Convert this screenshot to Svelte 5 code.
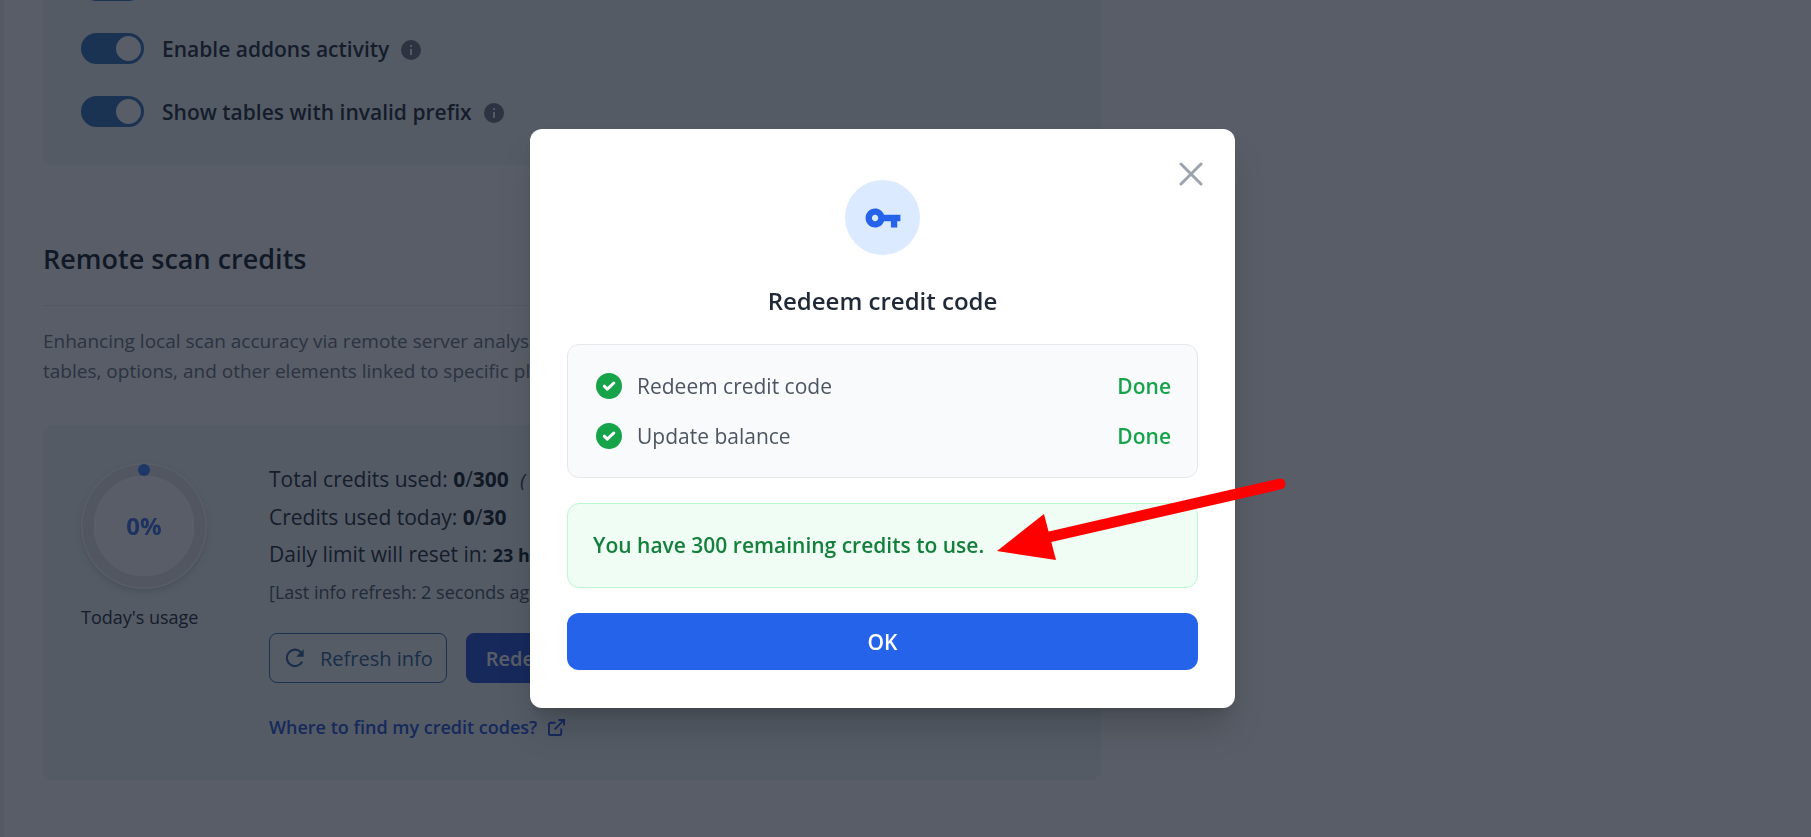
<script>
  const toggles = $state([
    { id: 'addons', label: 'Enable addons activity', on: true },
    { id: 'prefix', label: 'Show tables with invalid prefix', on: true }
  ]);
  let firstOn = $state(true);
  const steps = ['Redeem credit code', 'Update balance'];
</script>

<div class="page">
  <aside></aside>
  <main>
    <section class="panel toggles">
      <div class="toggle-row">
        <input type="checkbox" aria-label="Setting" bind:checked={firstOn} />
      </div>
      {#each toggles as t (t.id)}
        <div class="toggle-row">
          <input type="checkbox" id={t.id} bind:checked={t.on} />
          <label for={t.id}>{t.label}</label>
          <svg class="info" viewBox="0 0 20 20" aria-hidden="true">
            <circle cx="10" cy="10" r="10" />
            <rect x="9" y="9" width="2" height="6" />
            <rect x="9" y="5" width="2" height="2" />
          </svg>
        </div>
      {/each}
    </section>

    <h2>Remote scan credits</h2>
    <p class="intro">
      Enhancing local scan accuracy via remote server analysis<br />
      tables, options, and other elements linked to specific plugins
    </p>

    <section class="panel credits">
      <div class="usage">
        <svg class="ring" viewBox="0 0 126 126" aria-hidden="true">
          <circle cx="63" cy="63" r="63" fill="#fff" />
          <circle cx="63" cy="63" r="56" fill="none" stroke="#e6e7ec" stroke-width="11" />
          <circle cx="63" cy="7" r="6" fill="#3b82f6" />
          <text x="63" y="72" text-anchor="middle">0%</text>
        </svg>
        <span>Today's usage</span>
      </div>
      <div class="stats">
        <p>Total credits used: <b>0</b>/<b>300</b> <i>(</i></p>
        <p>Credits used today: <b>0</b>/<b>30</b></p>
        <p>Daily limit will reset in: <strong>23 hours</strong></p>
        <p class="small">[Last info refresh: 2 seconds ago]</p>
        <div class="actions">
          <button class="refresh" type="button">
            <svg viewBox="0 0 24 24" aria-hidden="true">
              <path d="M20.6 16.5A9.8 9.8 0 1 1 19 5L21 7" fill="none" stroke="currentColor" stroke-width="2.6" />
              <path d="M22.4 1.4v9H13.4z" fill="currentColor" />
            </svg>
            Refresh info
          </button>
          <button class="redeem" type="button">Redeem code</button>
        </div>
        <a href="#codes">
          Where to find my credit codes?
          <svg viewBox="0 0 18 18" aria-hidden="true" fill="none" stroke="currentColor" stroke-width="2">
            <path d="M8 4H3a2 2 0 0 0-2 2v9a2 2 0 0 0 2 2h9a2 2 0 0 0 2-2v-5M11 1h6v6M17 1L7 11" />
          </svg>
        </a>
      </div>
    </section>
  </main>
</div>

<div class="overlay">
  <div class="modal" role="dialog" aria-modal="true" aria-labelledby="modal-title">
    <button class="close" type="button" aria-label="Close">
      <svg viewBox="0 0 24 24" aria-hidden="true">
        <path d="M2 2l20 20M22 2L2 22" fill="none" stroke="currentColor" stroke-width="3" stroke-linecap="round" />
      </svg>
    </button>
    <div class="badge">
      <svg viewBox="0 0 24 24" aria-hidden="true">
        <path fill="currentColor" d="M12.65 10C11.83 7.67 9.61 6 7 6c-3.31 0-6 2.69-6 6s2.69 6 6 6c2.61 0 4.83-1.67 5.65-4H17v4h4v-4h2v-4H12.65zM7 14c-1.1 0-2-.9-2-2s.9-2 2-2 2 .9 2 2-.9 2-2 2z" />
      </svg>
    </div>
    <h3 id="modal-title">Redeem credit code</h3>
    <ul>
      {#each steps as step}
        <li>
          <svg viewBox="0 0 26 26" aria-hidden="true">
            <circle cx="13" cy="13" r="13" fill="#16a34a" />
            <path d="M8.3 13.2l3 2.9L17.8 10" fill="none" stroke="#fff" stroke-width="3" stroke-linecap="round" stroke-linejoin="round" />
          </svg>
          <span>{step}</span>
          <strong>Done</strong>
        </li>
      {/each}
    </ul>
    <p class="notice">You have 300 remaining credits to use.</p>
    <button class="ok" type="button">OK</button>
    <svg class="arrow" viewBox="0 0 290 80" aria-hidden="true">
      <path d="M283 7L52 60" stroke="#f00" stroke-width="11" stroke-linecap="round" />
      <path d="M0 74L47 37L59 83z" fill="#f00" />
    </svg>
  </div>
</div>

<style>
  :global(body) {
    font-family: 'Segoe UI', 'Open Sans', sans-serif;
    font-size: 21px;
    color: #1f2937;
    background: #fff;
    overflow: hidden;
  }
  * {
    box-sizing: border-box;
  }
  h2,
  h3,
  p,
  ul {
    margin: 0;
    padding: 0;
  }
  button {
    font: inherit;
    cursor: pointer;
  }
  svg {
    flex: none;
    display: block;
  }
  .page {
    display: flex;
    height: 100vh;
    overflow: hidden;
  }
  aside {
    flex: none;
    width: 4px;
    background: #f0f0f4;
  }
  main {
    width: 1097px;
    padding-left: 39px;
  }
  .panel {
    background: #f0f7f8;
    border-radius: 10px;
  }
  .toggles {
    display: flex;
    flex-direction: column;
    gap: 32px;
    margin-top: -68px;
    padding: 38px;
  }
  .toggle-row {
    display: flex;
    align-items: center;
    height: 31px;
    gap: 18px;
    font-weight: 600;
  }
  .toggle-row input {
    appearance: none;
    display: flex;
    align-items: center;
    width: 63px;
    height: 31px;
    margin: 0;
    border: 3px solid #2f72b9;
    border-radius: 16px;
    background: #2f72b9;
  }
  .toggle-row input::before {
    content: '';
    width: 25px;
    height: 25px;
    border-radius: 50%;
    background: #fff;
  }
  .toggle-row input:checked {
    justify-content: flex-end;
  }
  .info {
    width: 20px;
    height: 20px;
    margin: 2px 0 0 -6px;
    fill: #6b7280;
  }
  .info rect {
    fill: #f0f7f8;
  }
  h2 {
    padding: 71px 0 24px;
    border-bottom: 1px solid #eceef1;
    font-size: 27px;
    line-height: 45px;
    font-weight: 600;
    color: #111827;
  }
  .intro {
    padding: 20px 0 39px;
    font-size: 19px;
    line-height: 30px;
    color: #6b7280;
    white-space: nowrap;
  }
  .credits {
    display: flex;
    gap: 62px;
    padding: 36px 38px 39px;
  }
  .usage {
    width: 126px;
    padding-top: 2px;
    font-size: 18px;
    line-height: 24px;
  }
  .usage span {
    display: block;
    margin-top: 16px;
    white-space: nowrap;
  }
  .ring {
    width: 126px;
    height: 126px;
    overflow: visible;
    filter: drop-shadow(0 3px 3px #00000022);
  }
  .ring text {
    font-size: 24px;
    font-weight: 700;
    fill: #3b6fe6;
  }
  .stats {
    white-space: nowrap;
  }
  .stats p {
    line-height: 37px;
  }
  .stats b,
  .stats strong {
    color: #111827;
  }
  .stats strong {
    font-size: 18px;
  }
  .stats i {
    margin-left: 6px;
    font-size: 18px;
  }
  .stats .small {
    font-size: 18px;
    color: #4b5563;
  }
  .actions {
    display: flex;
    gap: 19px;
    margin: 22px 0 29px;
    font-size: 20px;
  }
  .actions button {
    display: flex;
    align-items: center;
    height: 50px;
    border-radius: 8px;
    border: 1px solid #2f6cb5;
  }
  .refresh {
    gap: 15px;
    padding: 0 13px 0 15px;
    background: #f8fafc;
    color: #2c6296;
  }
  .refresh svg {
    width: 20px;
    height: 20px;
  }
  .actions .redeem {
    padding: 0 19px;
    border-color: #2553d8;
    background: #2553d8;
    color: #fff;
    font-weight: 600;
  }
  a {
    display: inline-flex;
    align-items: center;
    gap: 11px;
    line-height: 28px;
    font-size: 18px;
    font-weight: 600;
    color: #2450d8;
    text-decoration: none;
  }
  a svg {
    width: 17px;
    height: 17px;
  }
  .overlay {
    position: fixed;
    inset: 0;
    display: flex;
    align-items: center;
    justify-content: center;
    padding-right: 46px;
    background: rgba(17, 24, 39, 0.7);
  }
  .modal {
    position: relative;
    width: 705px;
    padding: 51px 37px 38px;
    border-radius: 12px;
    background: #fff;
    box-shadow: 0 24px 36px -6px #0000002e, 0 8px 12px -6px #00000024;
  }
  .close {
    position: absolute;
    top: 33px;
    right: 32px;
    padding: 0;
    border: 0;
    background: none;
    color: #9ca3af;
  }
  .close svg {
    width: 24px;
    height: 24px;
  }
  .badge {
    display: grid;
    place-items: center;
    width: 75px;
    height: 75px;
    margin: 0 auto;
    border-radius: 50%;
    background: #dbeafe;
    color: #2563eb;
  }
  .badge svg {
    width: 38px;
    height: 38px;
  }
  h3 {
    margin: 28px 0 25px;
    line-height: 36px;
    font-size: 24px;
    font-weight: 600;
    text-align: center;
    color: #1f2937;
  }
  ul {
    display: grid;
    gap: 20px;
    padding: 26px;
    border: 1px solid #e5e7eb;
    border-radius: 12px;
    background: #f9fafb;
    list-style: none;
  }
  li {
    display: flex;
    align-items: center;
    height: 30px;
    padding-left: 2px;
    color: #4b5563;
  }
  li svg {
    width: 26px;
    height: 26px;
  }
  li span {
    flex: 1;
    margin-left: 15px;
  }
  li strong {
    font-weight: 600;
    color: #16a34a;
  }
  .notice {
    margin: 25px 0;
    padding: 26px 25px;
    line-height: 31px;
    border: 1px solid #bbf7d0;
    border-radius: 12px;
    background: #f0fdf4;
    font-weight: 600;
    color: #15803d;
  }
  .ok {
    width: 100%;
    height: 57px;
    border: 0;
    border-radius: 12px;
    background: #2563eb;
    color: #fff;
    font-weight: 600;
  }
  .arrow {
    position: absolute;
    top: 348px;
    left: 467px;
    width: 290px;
    height: 80px;
    overflow: visible;
  }
</style>
